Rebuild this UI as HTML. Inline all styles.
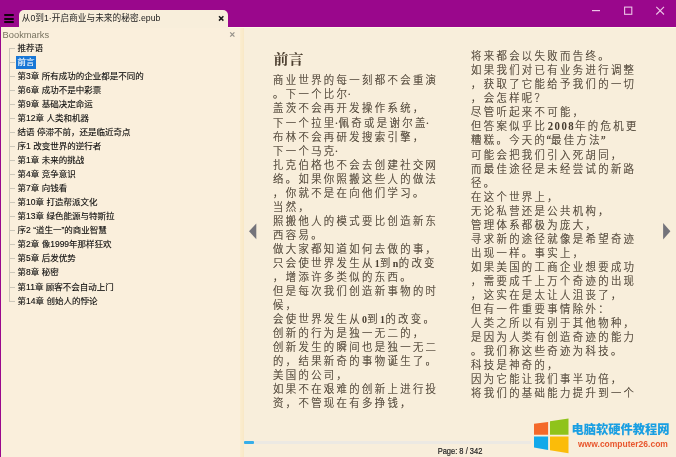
<!DOCTYPE html>
<html lang="zh-CN">
<head>
<meta charset="utf-8">
<title>从0到1·开启商业与未来的秘密.epub</title>
<style>
html,body{margin:0;padding:0;}
body{width:676px;height:457px;overflow:hidden;background:#f8eedb;position:relative;font-family:"Liberation Sans","Noto Sans CJK SC",sans-serif;}
#win{position:absolute;left:0;top:0;width:676px;height:457px;filter:blur(0.4px);}
#bgx{position:absolute;left:-10px;top:-10px;width:696px;height:477px;background:#f8eedb;}
#titlebar{position:absolute;left:-10px;top:-10px;width:696px;height:36.6px;background:#9a078c;}
#lborder{position:absolute;left:-10px;top:-10px;width:11px;height:477px;background:#9a078c;}
#tab{position:absolute;left:19px;top:10px;width:209px;height:18px;background:#f8eedb;border-radius:5px 5px 0 0;}
#tabtitle{position:absolute;left:21.8px;top:11px;height:15px;line-height:15px;font-size:8.7px;color:#222;white-space:nowrap;}
#burger div{position:absolute;left:4px;width:10px;height:2px;background:#14020f;border-radius:1px;}
#sidebar{position:absolute;left:1px;top:26.6px;width:239px;height:440px;background:#faefdc;}
#bm{position:absolute;left:2.6px;top:27.5px;height:14px;line-height:14px;font-size:9.3px;color:#77725f;}
#hl{position:absolute;left:228px;top:26.6px;width:458px;height:1.2px;background:#fef8e6;}
#divider{position:absolute;left:240px;top:28px;width:4px;height:439px;background:linear-gradient(90deg,#fbedd0,#f9e8c6);}
#content{position:absolute;left:244px;top:26.6px;width:442px;height:440px;background:#f8eedb;}
.ln{position:absolute;height:14px;line-height:14px;font-family:"Liberation Serif","Noto Sans CJK SC",sans-serif;font-size:11.5px;letter-spacing:2.63px;color:#463c2f;white-space:nowrap;font-weight:300;transform:scaleX(.9);transform-origin:left center;-webkit-text-stroke:0.24px #463c2f;}
.ln u{text-decoration:none;margin-left:-2.1px;letter-spacing:0.5px;}
.ln i{font-style:normal;letter-spacing:0.4px;font-family:"Liberation Serif",serif;font-weight:bold;font-size:11px;-webkit-text-stroke:0;}
.ln i.y{font-size:12px;letter-spacing:1.6px;margin-left:0.5px;}
.ln b{font-weight:400;margin-left:-1px;letter-spacing:0;}
#h1{position:absolute;left:273.5px;top:48.6px;height:20px;line-height:20px;font-family:"Liberation Serif","Noto Serif CJK SC",serif;font-weight:700;font-size:15px;color:#4b3e2f;transform:scaleY(.9);transform-origin:left center;white-space:nowrap;}
.ti{position:absolute;left:16px;height:13px;line-height:13px;font-size:8.5px;color:#0c0c0c;white-space:nowrap;font-weight:400;-webkit-text-stroke:0.12px #0c0c0c;}
.ti span{padding:0 1.6px;display:inline-block;height:13px;}
.ti.sel span{background:#1877d6;color:#fff;-webkit-text-stroke:0.12px #fff;}
#vline{position:absolute;left:9px;top:48px;width:1px;height:253px;background:#cbc6b9;}
.hc{position:absolute;left:9px;width:6.3px;height:1px;background:#cbc6b9;}
#pbar{position:absolute;left:244px;top:440.5px;width:287px;height:3px;background:#ece9e3;}
#pfill{position:absolute;left:244px;top:440.5px;width:9.8px;height:3px;background:#36aee9;border-radius:1px;}
#page{position:absolute;left:400px;top:444.5px;width:120px;height:12px;line-height:12px;font-size:9.7px;color:#1c1c1c;text-align:center;white-space:nowrap;transform:scaleX(.775);transform-origin:center;-webkit-text-stroke:0.2px #1c1c1c;}
#wm1{position:absolute;left:571.6px;top:421.4px;height:18px;line-height:18px;font-size:12.25px;font-weight:900;color:#1a9fe2;white-space:nowrap;letter-spacing:0;}
#wm2{position:absolute;left:578px;top:438px;height:12px;line-height:12px;font-size:8.5px;font-weight:bold;color:#e8572e;white-space:nowrap;}
svg{position:absolute;left:0;top:0;}
</style>
</head>
<body>
<div id="win">
<div id="bgx"></div>
<div id="titlebar"></div>
<div id="sidebar"></div>
<div id="content"></div>
<div id="hl"></div>
<div id="divider"></div>
<div id="lborder"></div>
<div id="tab"></div>
<div id="burger"><div style="top:14.2px"></div><div style="top:17.5px"></div><div style="top:20.8px"></div></div>
<div id="tabtitle">从0到1·开启商业与未来的秘密.epub</div>
<div id="bm">Bookmarks</div>
<div id="vline"></div>
<div class="hc" style="top:47.8px"></div><div class="ti" style="top:41.8px"><span>推荐语</span></div>
<div class="hc" style="top:61.8px"></div><div class="ti sel" style="top:55.8px"><span>前言</span></div>
<div class="hc" style="top:75.9px"></div><div class="ti" style="top:69.9px"><span>第3章 所有成功的企业都是不同的</span></div>
<div class="hc" style="top:89.9px"></div><div class="ti" style="top:83.9px"><span>第6章 成功不是中彩票</span></div>
<div class="hc" style="top:104.0px"></div><div class="ti" style="top:98.0px"><span>第9章 基础决定命运</span></div>
<div class="hc" style="top:118.0px"></div><div class="ti" style="top:112.0px"><span>第12章 人类和机器</span></div>
<div class="hc" style="top:132.0px"></div><div class="ti" style="top:126.0px"><span>结语 停滞不前，还是临近奇点</span></div>
<div class="hc" style="top:146.1px"></div><div class="ti" style="top:140.1px"><span>序1 改变世界的逆行者</span></div>
<div class="hc" style="top:160.1px"></div><div class="ti" style="top:154.1px"><span>第1章 未来的挑战</span></div>
<div class="hc" style="top:174.2px"></div><div class="ti" style="top:168.2px"><span>第4章 竞争意识</span></div>
<div class="hc" style="top:188.2px"></div><div class="ti" style="top:182.2px"><span>第7章 向钱看</span></div>
<div class="hc" style="top:202.2px"></div><div class="ti" style="top:196.2px"><span>第10章 打造帮派文化</span></div>
<div class="hc" style="top:216.3px"></div><div class="ti" style="top:210.3px"><span>第13章 绿色能源与特斯拉</span></div>
<div class="hc" style="top:230.3px"></div><div class="ti" style="top:224.3px"><span>序2 “道生一”的商业智慧</span></div>
<div class="hc" style="top:244.4px"></div><div class="ti" style="top:238.4px"><span>第2章 像1999年那样狂欢</span></div>
<div class="hc" style="top:258.4px"></div><div class="ti" style="top:252.4px"><span>第5章 后发优势</span></div>
<div class="hc" style="top:272.4px"></div><div class="ti" style="top:266.4px"><span>第8章 秘密</span></div>
<div class="hc" style="top:286.5px"></div><div class="ti" style="top:280.5px"><span>第11章 顾客不会自动上门</span></div>
<div class="hc" style="top:300.5px"></div><div class="ti" style="top:294.5px"><span>第14章 创始人的悖论</span></div>
<div id="h1">前言</div>
<div class="ln" style="left:273.4px;top:73.40px">商业世界的每一刻都不会重演</div>
<div class="ln" style="left:273.4px;top:87.45px">。下一个比尔<u>·</u></div>
<div class="ln" style="left:273.4px;top:101.49px">盖茨不会再开发操作系统，</div>
<div class="ln" style="left:273.4px;top:115.53px">下一个拉里<u>·</u>佩奇或是谢尔盖<u>·</u></div>
<div class="ln" style="left:273.4px;top:129.58px">布林不会再研发搜索引擎，</div>
<div class="ln" style="left:273.4px;top:143.62px">下一个马克<u>·</u></div>
<div class="ln" style="left:273.4px;top:157.67px">扎克伯格也不会去创建社交网</div>
<div class="ln" style="left:273.4px;top:171.72px">络。如果你照搬这些人的做法</div>
<div class="ln" style="left:273.4px;top:185.76px">，你就不是在向他们学习。</div>
<div class="ln" style="left:273.4px;top:199.81px">当然，</div>
<div class="ln" style="left:273.4px;top:213.85px">照搬他人的模式要比创造新东</div>
<div class="ln" style="left:273.4px;top:227.90px">西容易。</div>
<div class="ln" style="left:273.4px;top:241.94px">做大家都知道如何去做的事，</div>
<div class="ln" style="left:273.4px;top:255.99px">只会使世界发生从<i>1</i>到<i>n</i>的改变</div>
<div class="ln" style="left:273.4px;top:270.03px">，增添许多类似的东西。</div>
<div class="ln" style="left:273.4px;top:284.08px">但是每次我们创造新事物的时</div>
<div class="ln" style="left:273.4px;top:298.12px">候，</div>
<div class="ln" style="left:273.4px;top:312.16px">会使世界发生从<i>0</i>到<i>1</i>的改变。</div>
<div class="ln" style="left:273.4px;top:326.21px">创新的行为是独一无二的，</div>
<div class="ln" style="left:273.4px;top:340.25px">创新发生的瞬间也是独一无二</div>
<div class="ln" style="left:273.4px;top:354.30px">的，结果新奇的事物诞生了。</div>
<div class="ln" style="left:273.4px;top:368.35px">美国的公司，</div>
<div class="ln" style="left:273.4px;top:382.39px">如果不在艰难的创新上进行投</div>
<div class="ln" style="left:273.4px;top:396.44px">资，不管现在有多挣钱，</div>
<div class="ln" style="left:470.5px;top:49.20px">将来都会以失败而告终。</div>
<div class="ln" style="left:470.5px;top:63.25px">如果我们对已有业务进行调整</div>
<div class="ln" style="left:470.5px;top:77.29px">，获取了它能给予我们的一切</div>
<div class="ln" style="left:470.5px;top:91.34px">，会怎样呢？</div>
<div class="ln" style="left:470.5px;top:105.38px">尽管听起来不可能，</div>
<div class="ln" style="left:470.5px;top:119.42px">但答案似乎比<i class="y">2008</i>年的危机更</div>
<div class="ln" style="left:470.5px;top:133.47px">糟糕。今天的<b>“</b>最佳方法<b>”</b></div>
<div class="ln" style="left:470.5px;top:147.51px">可能会把我们引入死胡同，</div>
<div class="ln" style="left:470.5px;top:161.56px">而最佳途径是未经尝试的新路</div>
<div class="ln" style="left:470.5px;top:175.61px">径。</div>
<div class="ln" style="left:470.5px;top:189.65px">在这个世界上，</div>
<div class="ln" style="left:470.5px;top:203.69px">无论私营还是公共机构，</div>
<div class="ln" style="left:470.5px;top:217.74px">管理体系都极为庞大，</div>
<div class="ln" style="left:470.5px;top:231.79px">寻求新的途径就像是希望奇迹</div>
<div class="ln" style="left:470.5px;top:245.83px">出现一样。事实上，</div>
<div class="ln" style="left:470.5px;top:259.88px">如果美国的工商企业想要成功</div>
<div class="ln" style="left:470.5px;top:273.92px">，需要成千上万个奇迹的出现</div>
<div class="ln" style="left:470.5px;top:287.96px">，这实在是太让人沮丧了，</div>
<div class="ln" style="left:470.5px;top:302.01px">但有一件重要事情除外：</div>
<div class="ln" style="left:470.5px;top:316.06px">人类之所以有别于其他物种，</div>
<div class="ln" style="left:470.5px;top:330.10px">是因为人类有创造奇迹的能力</div>
<div class="ln" style="left:470.5px;top:344.14px">。我们称这些奇迹为科技。</div>
<div class="ln" style="left:470.5px;top:358.19px">科技是神奇的，</div>
<div class="ln" style="left:470.5px;top:372.24px">因为它能让我们事半功倍，</div>
<div class="ln" style="left:470.5px;top:386.28px">将我们的基础能力提升到一个</div>
<div id="pbar"></div><div id="pfill"></div>
<div id="page">Page: 8 / 342</div>
<div id="wm1">电脑软硬件教程网</div>
<div id="wm2">www.computer26.com</div>
<svg width="676" height="457" viewBox="0 0 676 457">
<!-- tab close -->
<path d="M219 16.2 L223.4 20.6 M223.4 16.2 L219 20.6" stroke="#1a1a1a" stroke-width="1.5" fill="none"/>
<!-- sidebar close -->
<path d="M230.2 32.4 L234.4 36.6 M234.4 32.4 L230.2 36.6" stroke="#94908a" stroke-width="1.2" fill="none"/>
<!-- window controls -->
<path d="M592 10.6 H600" stroke="#ecc4e6" stroke-width="1.2" fill="none"/>
<rect x="624.6" y="7.1" width="7.2" height="7.2" stroke="#ecc4e6" stroke-width="1.1" fill="none"/>
<path d="M656.3 6.8 L664 14.5 M664 6.8 L656.3 14.5" stroke="#ecc4e6" stroke-width="1.1" fill="none"/>
<!-- nav arrows -->
<polygon points="249,231.3 256.3,223.4 256.3,239.2" fill="#74737a"/>
<polygon points="670.4,231.3 663.1,223 663.1,239.6" fill="#74737a"/>
<!-- windows logo -->
<polygon points="534,423.8 548.1,421.9 548.1,434.8 534,434.8" fill="#f4692a"/>
<polygon points="550,421.3 568.5,418.5 568.5,434.8 550,434.8" fill="#8fc31b"/>
<polygon points="534,436.5 548.1,436.5 548.1,450 534,447.6" fill="#12a9ea"/>
<polygon points="550,436.5 568.5,436.5 568.5,453.2 550,450.2" fill="#fbbc09"/>
</svg>
</div>
</body>
</html>
